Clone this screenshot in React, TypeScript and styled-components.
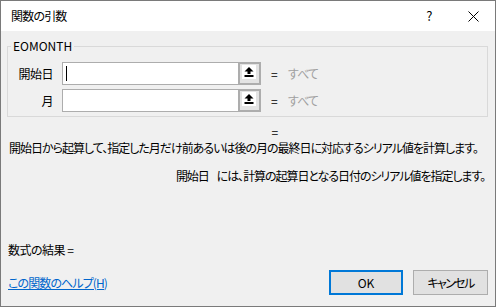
import styled, { createGlobalStyle } from 'styled-components'

const GlobalStyle = createGlobalStyle`
  html, body {
    margin: 0;
    padding: 0;
    background: #ffffff;
  }
  * {
    box-sizing: border-box;
  }
`

const Window = styled.div`
  width: 496px;
  height: 307px;
  border: 1px solid #7a7a7a;
  background-color: #f0f0f0;
  display: flex;
  flex-direction: column;
  font-family: 'Noto Sans CJK JP', 'Noto Sans', sans-serif;
  font-feature-settings: 'palt';
  font-size: 12px;
  line-height: 16px;
  letter-spacing: -0.5px;
  color: #000000;
  overflow: hidden;
`

const TitleBar = styled.div`
  height: 30px;
  background-color: #ffffff;
  display: flex;
  align-items: center;
  padding-left: 10px;
`

const Title = styled.span`
  flex: 1;
  font-size: 12px;
  letter-spacing: -0.8px;
`

const TitleButton = styled.span`
  width: 44px;
  display: flex;
  justify-content: center;
  align-items: center;
  font-size: 13px;
`

const Body = styled.div`
  flex: 1;
  display: flex;
  flex-direction: column;
  padding: 0 7px 0 6px;
`

const GroupBox = styled.fieldset`
  margin: 7px 0 0 0;
  padding: 8px 0 4px 0;
  border: 1px solid #d9d9d9;
  min-width: 0;

  legend {
    margin-left: 3px;
    padding: 0 2px;
    line-height: 16px;
    letter-spacing: 0;
  }
`

const ArgGrid = styled.div`
  display: grid;
  grid-template-columns: 45px 199px 8px auto;
  column-gap: 9px;
  row-gap: 4px;
  align-items: center;
`

const ArgLabel = styled.span`
  text-align: right;
`

const InputBox = styled.div`
  height: 23px;
  display: flex;
`

const Field = styled.div`
  flex: 1;
  background: #ffffff;
  border: 1px solid #adadad;
  border-right: none;
  display: flex;
  align-items: center;
  padding-left: 3px;
`

const Caret = styled.span`
  width: 1px;
  height: 15px;
  background: #000000;
`

const RefButton = styled.div`
  width: 23px;
  height: 23px;
  border: 2px solid #adadad;
  background-color: #e3e3e3;
  padding: 1px 0 0 2px;
`

const IconBox = styled.div`
  width: 14px;
  height: 14px;
  background: #ffffff;
  display: flex;
`

const Eq = styled.span`
  text-align: center;
`

const ArgValue = styled.span`
  color: #a0a0a0;
  padding-left: 1px;
  letter-spacing: -1px;
`

const EqLine = styled.div`
  margin-top: 7px;
  text-align: center;
  padding-left: 54px;
`

const Description = styled.div`
  padding-left: 2px;
  white-space: nowrap;
  letter-spacing: -1px;
`

const ArgHelp = styled.div`
  margin-top: 12px;
  display: flex;
  justify-content: flex-end;
  gap: 8px;
  padding-right: 3px;
  white-space: nowrap;
  letter-spacing: -1.05px;
`

const Result = styled.div`
  margin-top: 58px;
  padding-left: 1px;
`

const Footer = styled.div`
  margin-top: 12px;
  display: flex;
  align-items: center;
`

const HelpLink = styled.a`
  flex: 1;
  color: #0066cc;
  text-decoration: underline;
  padding-left: 1px;
  letter-spacing: -0.9px;
`

const Button = styled.button<{ $primary?: boolean }>`
  width: ${(p) => (p.$primary ? '74px' : '75px')};
  height: 25px;
  margin-left: 10px;
  background-color: #e1e1e1;
  border: ${(p) => (p.$primary ? '2px solid #0078d7' : '1px solid #adadad')};
  font-family: inherit;
  font-feature-settings: inherit;
  letter-spacing: ${(p) => (p.$primary ? '0' : '-1.6px')};
  font-size: 12px;
  color: #000000;
  padding: 0;
`

function RefIcon() {
  return (
    <IconBox>
      <svg width="14" height="14" viewBox="0 0 14 14">
        <polygon points="7,2 11.5,6.5 2.5,6.5" fill="#000" />
        <rect x="5.5" y="6" width="3" height="3" fill="#000" />
        <rect x="2.5" y="10" width="9" height="2" fill="#000" />
      </svg>
    </IconBox>
  )
}

function CloseIcon() {
  return (
    <svg width="11" height="11" viewBox="0 0 11 11">
      <path d="M0.5 0.5 L10.5 10.5 M10.5 0.5 L0.5 10.5" stroke="#000" strokeWidth="1" />
    </svg>
  )
}

export default function App() {
  return (
    <>
      <GlobalStyle />
      <Window>
        <TitleBar>
          <Title>関数の引数</Title>
          <TitleButton>?</TitleButton>
          <TitleButton>
            <CloseIcon />
          </TitleButton>
        </TitleBar>

        <Body>
          <GroupBox>
            <legend>EOMONTH</legend>
            <ArgGrid>
              <ArgLabel>開始日</ArgLabel>
              <InputBox>
                <Field>
                  <Caret />
                </Field>
                <RefButton>
                  <RefIcon />
                </RefButton>
              </InputBox>
              <Eq>=</Eq>
              <ArgValue>すべて</ArgValue>

              <ArgLabel>月</ArgLabel>
              <InputBox>
                <Field />
                <RefButton>
                  <RefIcon />
                </RefButton>
              </InputBox>
              <Eq>=</Eq>
              <ArgValue>すべて</ArgValue>
            </ArgGrid>
          </GroupBox>

          <EqLine>=</EqLine>
          <Description>
            開始日から起算して、指定した月だけ前あるいは後の月の最終日に対応するシリアル値を計算します。
          </Description>
          <ArgHelp>
            <span>開始日</span>
            <span>には、計算の起算日となる日付のシリアル値を指定します。</span>
          </ArgHelp>

          <Result>数式の結果 =</Result>

          <Footer>
            <HelpLink href="#">この関数のヘルプ(H)</HelpLink>
            <Button $primary>OK</Button>
            <Button>キャンセル</Button>
          </Footer>
        </Body>
      </Window>
    </>
  )
}
